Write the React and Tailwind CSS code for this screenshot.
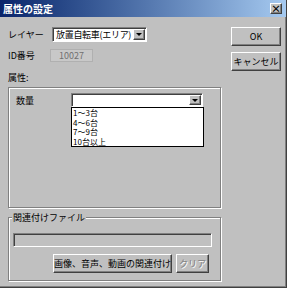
import React from "react";

const font = { fontFamily: "'Noto Sans CJK JP', 'Noto Sans', sans-serif" };

function Raised({ className = "", children }) {
  return (
    <div
      className={
        "flex items-center justify-center whitespace-nowrap bg-[#c0c0c0] border border-t-white border-l-white border-b-[#404040] border-r-[#404040] shadow-[inset_-1px_-1px_0_#808080] " +
        className
      }
    >
      {children}
    </div>
  );
}

function Arrow() {
  return (
    <Raised className="w-[12px] h-full shrink-0">
      <div className="w-0 h-0 border-l-[3px] border-r-[3px] border-t-[3px] border-l-transparent border-r-transparent border-t-black" />
    </Raised>
  );
}

export default function App() {
  return (
    <div
      className="w-[287px] h-[288px] bg-[#c0c0c0] flex flex-col overflow-hidden text-[9px] leading-none text-black border-r border-b border-r-[#404040] border-b-[#404040] shadow-[inset_-1px_-1px_0_#808080]"
      style={font}
    >
      <div className="h-[17px] shrink-0 flex items-center justify-between pl-[3px] pr-[4px] bg-gradient-to-r from-[#0a246a] to-[#a6caf0]">
        <span className="text-white font-bold text-[10px]">属性の設定</span>
        <Raised className="w-[12px] h-[11px] text-[10px] font-bold">×</Raised>
      </div>

      <div className="flex pl-[8px] pt-[10px]">
        <div className="w-[214px] flex flex-col">
          <div className="h-[15px] flex items-center">
            <span className="w-[44px] whitespace-nowrap">レイヤー</span>
            <div className="w-[95px] h-[15px] flex bg-white border border-t-[#808080] border-l-[#808080] border-b-white border-r-white shadow-[inset_1px_1px_0_#404040] p-[1px]">
              <span className="flex-1 flex items-center pl-[2px] whitespace-nowrap overflow-hidden tracking-[-0.3px]">放置自転車(エリア)</span>
              <Arrow />
            </div>
          </div>
          <div className="h-[13px] mt-[7px] flex items-center">
            <span className="w-[42px] whitespace-nowrap">ID番号</span>
            <div className="w-[43px] h-[13px] flex items-center justify-center bg-[#c8c8c8] border border-[#b0b0b0] text-[#707070]">
              10027
            </div>
          </div>
          <div className="h-[12px] mt-[9px] flex items-center">属性:</div>
          <div className="mt-[4px] h-[121px] w-[213px] border border-[#808080] shadow-[1px_1px_0_#fff,inset_1px_1px_0_#fff] pt-[5px] pl-[7px]">
            <div className="flex items-center h-[14px]">
              <span className="w-[55px]">数量</span>
              <div className="relative w-[132px] h-[14px]">
                <div className="w-full h-full flex bg-white border border-t-[#808080] border-l-[#808080] border-b-white border-r-white shadow-[inset_1px_1px_0_#404040] p-[1px]">
                  <span className="flex-1" />
                  <Arrow />
                </div>
                <div className="absolute left-0 top-full w-[133px] h-[40px] bg-white border border-black flex flex-col pl-[1px] text-[8px] leading-[9.5px]">
                  <span>1～3台</span>
                  <span>4～6台</span>
                  <span>7～9台</span>
                  <span>10台以上</span>
                </div>
              </div>
            </div>
          </div>
          <div className="relative mt-[9px] h-[64px] w-[213px] border border-[#808080] shadow-[1px_1px_0_#fff,inset_1px_1px_0_#fff] flex flex-col">
            <span className="absolute -top-[5px] left-[3px] px-[1px] bg-[#c0c0c0]">関連付けファイル</span>
            <div className="mt-[15px] ml-[4px] w-[199px] h-[14px] bg-[#c0c0c0] border border-t-[#808080] border-l-[#808080] border-b-white border-r-white shadow-[inset_1px_1px_0_#404040]" />
            <div className="mt-[7px] flex justify-end gap-[4px] pr-[11px]">
              <Raised className="w-[119px] h-[19px]">画像、音声、動画の関連付け</Raised>
              <Raised className="w-[33px] h-[19px] text-[#808080] [text-shadow:1px_1px_0_#fff]">クリア</Raised>
            </div>
          </div>
        </div>
        <div className="ml-[9px] w-[50px] flex flex-col">
          <Raised className="h-[19px]">OK</Raised>
          <Raised className="h-[19px] mt-[6px]">キャンセル</Raised>
        </div>
      </div>
    </div>
  );
}
